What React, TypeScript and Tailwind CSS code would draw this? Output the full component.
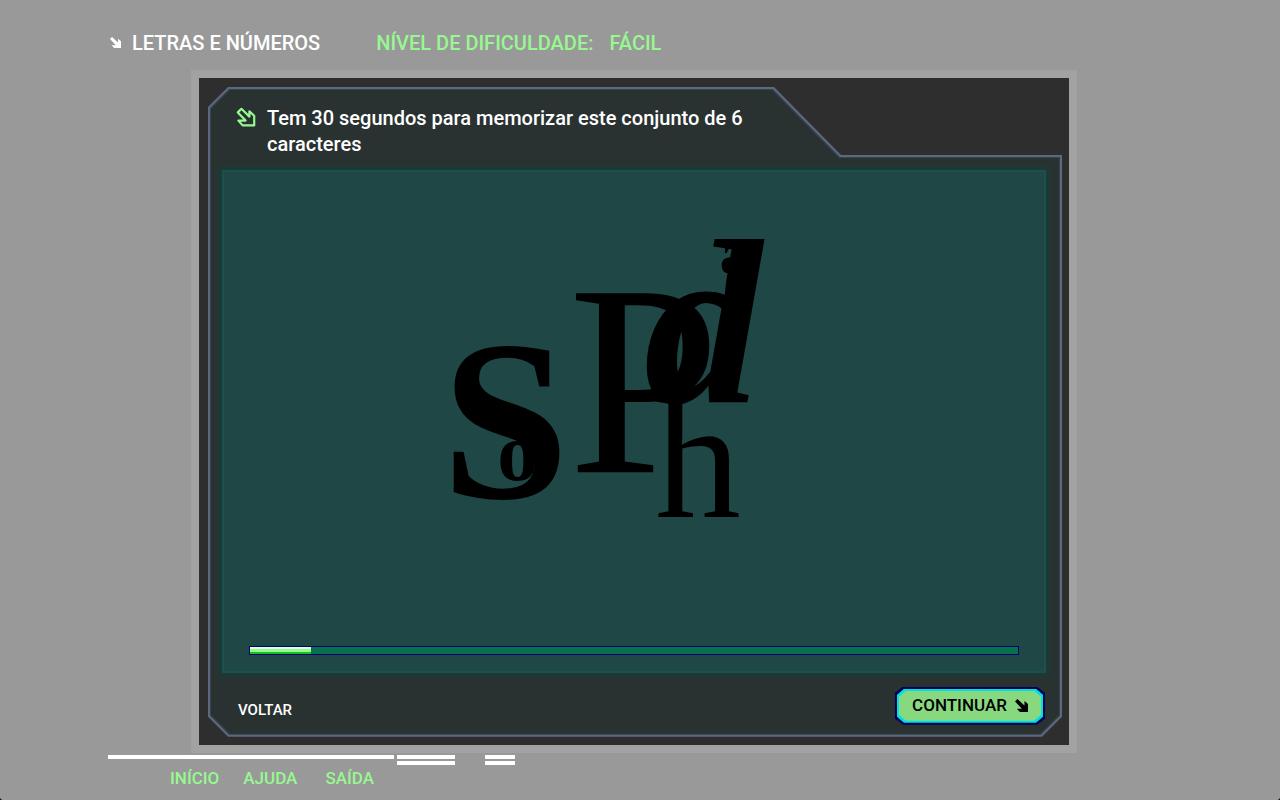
import React from 'react';

type Glyph = { char: string; x: number; y: number; size: number; className: string };

const glyphs: Glyph[] = [
  { char: 'S', x: 218, y: 327, size: 230, className: 'font-bold' },
  { char: 'o', x: 274, y: 309, size: 82, className: 'font-bold' },
  { char: 'P', x: 345, y: 301, size: 274, className: '' },
  { char: 'd', x: 421, y: 231, size: 236, className: 'font-bold italic' },
  { char: 'a', x: 497, y: 101, size: 60, className: 'font-bold' },
  { char: 'h', x: 432, y: 346, size: 172, className: '' },
];

const links = [
  { label: 'INÍCIO', className: 'ml-[62px]' },
  { label: 'AJUDA', className: 'ml-6' },
  { label: 'SAÍDA', className: 'ml-7' },
];

function Arrow({ className }: { className: string }) {
  return (
    <svg viewBox="0 0 14 14" className={className} fill="currentColor" aria-hidden="true">
      <path d="M0 2.6 L2.6 0 L10.2 7 V2.2 L14 5.4 V14 H5.2 L2 10.4 H7.4 Z" />
    </svg>
  );
}

function OutlineArrow({ className }: { className: string }) {
  return (
    <svg viewBox="0 0 20 20" className={className} fill="none" stroke="currentColor" strokeWidth="2.2" strokeLinejoin="round" strokeLinecap="round" aria-hidden="true">
      <path d="M1.8 5.4 L5.4 1.8 L13.4 9.6 V4.4 L18.2 8.8 V18.4 H6.6 L2.4 13.6 H9.6 Z" />
    </svg>
  );
}

export default function App() {
  return (
    <div className="min-h-screen bg-black font-['Roboto',sans-serif] font-medium">
      <div className="min-h-screen rounded-b-[3px] bg-[#999999]">
        <div className="mx-auto w-full max-w-[1064px]">
          <header className="flex h-[70px] items-center pt-[15px] text-xl leading-7 text-white">
            <Arrow className="ml-[2px] mr-[11px] h-[11px] w-[11px]" />
            <h1>LETRAS E NÚMEROS</h1>
            <p className="ml-14 flex gap-4 text-[#98f890]">
              <span>NÍVEL DE DIFICULDADE:</span>
              <span>FÁCIL</span>
            </p>
          </header>

          <main className="ml-[83px] mr-[95px] border-8 border-[#a2a2a2] bg-[#2e2e2e] pb-2 pl-[9px] pr-[7px] pt-[9px]">
            <div className="bg-[#5c6880] p-[2px] [clip-path:polygon(20px_0,566px_0,633px_68px,100%_68px,100%_calc(100%_-_20px),calc(100%_-_20px)_100%,20px_100%,0_calc(100%_-_20px),0_20px)]">
              <div className="bg-[#36434b] p-px [clip-path:polygon(19px_0,563px_0,630px_68px,100%_68px,100%_calc(100%_-_19px),calc(100%_-_19px)_100%,19px_100%,0_calc(100%_-_19px),0_19px)]">
                <div className="bg-[#2a3231] pl-[6px] pr-2 [clip-path:polygon(19px_0,561px_0,628px_68px,100%_68px,100%_calc(100%_-_19px),calc(100%_-_19px)_100%,19px_100%,0_calc(100%_-_19px),0_19px)]">
                  <div className="flex h-[75px] gap-[11px] pl-[19px] pt-[15px] text-white">
                    <OutlineArrow className="mt-[2px] h-5 w-5 shrink-0 text-[#98f890]" />
                    <p className="max-w-[490px] text-xl leading-[26px]">
                      Tem 30 segundos para memorizar este conjunto de 6 caracteres
                    </p>
                  </div>

                  <section aria-label="Caracteres" className="border-[5px] border-[#1f3836] bg-[#1f4746]">
                    <div className="border-2 border-[#1a504e] pb-4">
                      <svg viewBox="0 0 822 475" className="block w-full font-['Liberation_Serif',serif] font-normal" fill="black">
                        {glyphs.map((g) => (
                          <text key={g.char} x={g.x} y={g.y} fontSize={g.size} className={g.className}>
                            {g.char}
                          </text>
                        ))}
                      </svg>
                      <div role="progressbar" aria-label="Tempo" aria-valuenow={8} aria-valuemin={0} aria-valuemax={100} className="mx-[25px] h-[9px] border border-[#000078] bg-[#08704c]">
                        <div className="h-full bg-[linear-gradient(#e0ffe0_0_2px,#98f890_2px_5px,#18c018_5px)]" style={{ width: '8%' }} />
                      </div>
                    </div>
                  </section>

                  <div className="flex h-14 items-start justify-between pl-[21px] pr-[6px] pt-[9px]">
                    <button className="mt-[11px] text-[15px] leading-6 text-white">VOLTAR</button>
                    <button className="bg-[#000058] p-[2px] [clip-path:polygon(8px_0,calc(100%_-_8px)_0,100%_6px,100%_calc(100%_-_6px),calc(100%_-_8px)_100%,8px_100%,0_calc(100%_-_6px),0_6px)]">
                      <span className="block bg-[#00e0e0] p-[2px] [clip-path:polygon(7px_0,calc(100%_-_7px)_0,100%_6px,100%_calc(100%_-_6px),calc(100%_-_7px)_100%,7px_100%,0_calc(100%_-_6px),0_6px)]">
                        <span className="flex h-[30px] w-[142px] items-center justify-center gap-2 bg-[#88d880] text-[17px] text-black [clip-path:polygon(7px_0,calc(100%_-_7px)_0,100%_6px,100%_calc(100%_-_6px),calc(100%_-_7px)_100%,7px_100%,0_calc(100%_-_6px),0_6px)]">
                          CONTINUAR
                          <Arrow className="h-[13px] w-[13px]" />
                        </span>
                      </span>
                    </button>
                  </div>
                </div>
              </div>
            </div>
          </main>

          <footer className="pt-[2px]">
            <div className="flex items-start">
              <div className="h-1 w-[286px] bg-white" />
              <div className="ml-[3px] h-[10px] w-[58px] border-y-4 border-white" />
              <div className="ml-[30px] h-[10px] w-[30px] border-y-4 border-white" />
            </div>
            <nav className="flex pt-px text-[17px] leading-6 text-[#98f890]">
              {links.map((l) => (
                <a key={l.label} href="#" className={l.className}>{l.label}</a>
              ))}
            </nav>
          </footer>
        </div>
      </div>
    </div>
  );
}
